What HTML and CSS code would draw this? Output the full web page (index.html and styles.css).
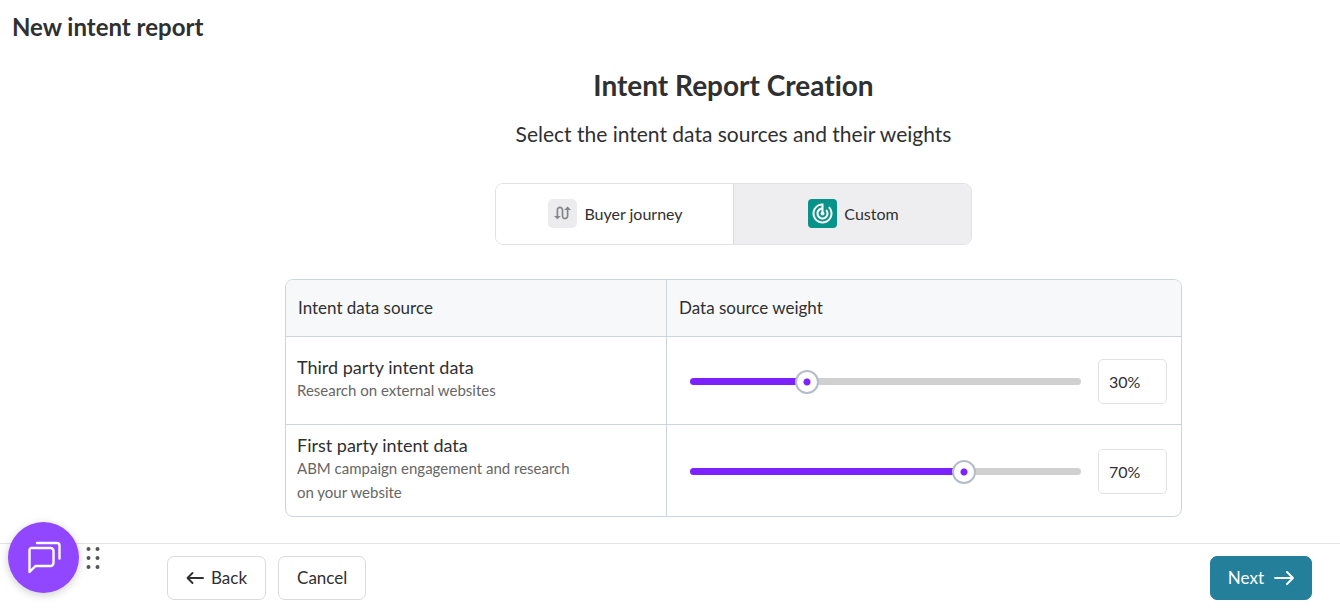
FILE: index.html
```
<!DOCTYPE html>
<html lang="en">
<head>
  <meta charset="utf-8">
  <title>New intent report</title>
  <link rel="stylesheet" href="styles.css">
</head>
<body>
  <header class="page-header">
    <h1>New intent report</h1>
  </header>

  <main class="wizard">
    <h2>Intent Report Creation</h2>
    <p class="subtitle">Select the intent data sources and their weights</p>

    <div class="tabs">
      <button type="button" class="tab">
        <svg class="tab-icon" viewBox="0 0 29 29" aria-hidden="true">
          <rect width="29" height="29" rx="5" fill="#ececee"/>
          <path transform="translate(4.3 4.2) scale(.85)" fill="#85868c" d="M18 4l-4 4h3v7c0 1.100-.9 2-2 2s-2-.9-2-2V8c0-2.210-1.790-4-4-4S5 5.790 5 8v7H2l4 4 4-4H7V8c0-1.100.9-2 2-2s2 .9 2 2v7c0 2.210 1.790 4 4 4s4-1.790 4-4V8h3l-4-4z"/>
        </svg>
        Buyer journey
      </button>
      <button type="button" class="tab active">
        <svg class="tab-icon" viewBox="0 0 29 29" aria-hidden="true">
          <rect width="29" height="29" rx="4" fill="#079389"/>
          <path transform="translate(2.5 2.5)" fill="#fff" d="M19.070 4.930l-1.410 1.410C19.100 7.790 20 9.790 20 12c0 4.420-3.580 8-8 8s-8-3.580-8-8c0-4.080 3.050-7.440 7-7.930v2.020C8.160 6.570 6 9.030 6 12c0 3.310 2.690 6 6 6s6-2.690 6-6c0-1.660-.67-3.160-1.760-4.240l-1.410 1.410C15.550 9.900 16 10.900 16 12c0 2.210-1.790 4-4 4s-4-1.790-4-4c0-1.860 1.280-3.410 3-3.860v2.140c-.6.350-1 .98-1 1.720 0 1.100.9 2 2 2s2-.9 2-2c0-.74-.4-1.380-1-1.720V2h-1C6.480 2 2 6.480 2 12s4.480 10 10 10 10-4.480 10-10c0-2.760-1.120-5.260-2.930-7.070z"/>
        </svg>
        Custom
      </button>
    </div>

    <table class="sources">
      <thead>
        <tr>
          <th class="source-col">Intent data source</th>
          <th>Data source weight</th>
        </tr>
      </thead>
      <tbody>
        <tr>
          <td>
            <label class="source-name" for="thirdParty">Third party intent data</label>
            <p class="source-info">Research on external websites</p>
          </td>
          <td class="weight-cell">
            <div class="weight">
              <div class="slider" style="--value: 30%">
                <input type="range" id="thirdParty" min="0" max="100" value="30">
              </div>
              <input type="text" class="weight-value" aria-label="Third party weight" value="30%">
            </div>
          </td>
        </tr>
        <tr class="tall">
          <td>
            <label class="source-name" for="firstParty">First party intent data</label>
            <p class="source-info">ABM campaign engagement and research on your website</p>
          </td>
          <td class="weight-cell">
            <div class="weight">
              <div class="slider" style="--value: 70%">
                <input type="range" id="firstParty" min="0" max="100" value="70">
              </div>
              <input type="text" class="weight-value" aria-label="First party weight" value="70%">
            </div>
          </td>
        </tr>
      </tbody>
    </table>
  </main>

  <footer class="actions">
    <button type="button" class="btn">
      <svg width="18" height="14" viewBox="0 0 18 14" fill="none" stroke="currentColor" stroke-width="1.900" stroke-linecap="round" stroke-linejoin="round" aria-hidden="true">
        <path d="M17 7H1.500M6.500 2l-5 5 5 5"/>
      </svg>
      Back
    </button>
    <button type="button" class="btn">Cancel</button>
    <button type="button" class="btn btn-next">
      Next
      <svg width="20" height="14" viewBox="0 0 20 14" fill="none" stroke="currentColor" stroke-width="1.900" stroke-linecap="round" stroke-linejoin="round" aria-hidden="true">
        <path d="M1 7h18M13 1l6 6-6 6"/>
      </svg>
    </button>
  </footer>

  <div class="chat">
    <button type="button" class="chat-button" aria-label="Open chat">
      <svg width="36" height="36" viewBox="0 0 36 36" fill="none" stroke="#fff" stroke-width="2.400" stroke-linecap="round" stroke-linejoin="round" aria-hidden="true">
        <path d="M5.500 8h19a3 3 0 0 1 3 3v12a3 3 0 0 1-3 3H9.500L3.500 32V10a2 2 0 0 1 2-2z"/>
        <path d="M11 3H31a2.500 2.500 0 0 1 2.500 2.500v13"/>
      </svg>
    </button>
    <svg width="16" height="24" viewBox="0 0 16 24" fill="#555" aria-hidden="true">
      <circle cx="3.500" cy="3" r="2"/><circle cx="12.500" cy="3" r="2"/>
      <circle cx="3.500" cy="12" r="2"/><circle cx="12.500" cy="12" r="2"/>
      <circle cx="3.500" cy="21" r="2"/><circle cx="12.500" cy="21" r="2"/>
    </svg>
  </div>

  <script>
    // the two weights always add up to 100%
    var sliders = document.querySelectorAll(".slider input");

    function setWeight(slider, value) {
      slider.value = value;
      slider.parentElement.style.setProperty("--value", value + "%");
      slider.closest(".weight").querySelector(".weight-value").value = value + "%";
    }

    sliders.forEach(function (slider, i) {
      slider.addEventListener("input", function () {
        setWeight(slider, slider.value);
        setWeight(sliders[1 - i], 100 - slider.value);
      });
    });
  </script>
</body>
</html>
```
FILE: styles.css
```
* {
  box-sizing: border-box;
}

body {
  margin: 0;
  min-height: 100vh;
  display: flex;
  flex-direction: column;
  font-family: Lato, sans-serif;
  font-size: 16px;
  font-variant-ligatures: none;
  color: #2f3031;
  background-color: #fff;
}

h1,
h2,
p {
  margin: 0;
}

button,
input {
  font: inherit;
  color: inherit;
}

button {
  cursor: pointer;
}

.page-header {
  padding: 11px 12px;
}

h1 {
  font-size: 24px;
  line-height: 32px;
  font-weight: 700;
}

.wizard {
  flex: 1;
  display: flex;
  flex-direction: column;
  align-items: center;
  padding: 13px 32px 24px 159px;
}

h2 {
  font-size: 28px;
  line-height: 36px;
  font-weight: 700;
}

.subtitle {
  margin-top: 17px;
  font-size: 21px;
  line-height: 28px;
}

.tabs {
  display: flex;
  width: 100%;
  max-width: 477px;
  margin-top: 35px;
  border: 1px solid #e2e2e5;
  border-radius: 8px;
  overflow: hidden;
}

.tab {
  flex: 1;
  display: flex;
  align-items: center;
  justify-content: center;
  gap: 7px;
  height: 60px;
  padding: 0 6px 2px 8px;
  border: none;
  background-color: #fff;
}

.tab.active {
  border-left: 1px solid #dcdce0;
  background-color: #eeeef0;
}

.tab-icon {
  width: 29px;
  height: 29px;
}

.sources {
  width: 100%;
  max-width: 897px;
  margin-top: 34px;
  table-layout: fixed;
  border: 1px solid #cdd5dc;
  border-radius: 8px;
  border-spacing: 0;
  overflow: hidden;
}

.sources th {
  height: 56px;
  padding: 0 12px 2px;
  background-color: #f7f8fa;
  font-size: 17px;
  font-weight: 400;
  text-align: left;
}

.sources td {
  height: 88px;
  padding: 0 11px 3px;
  border-top: 1px solid #cdd5dc;
}

.sources .tall td {
  height: 92px;
}

.sources th + th,
.sources td + td {
  border-left: 1px solid #cdd5dc;
}

.source-col {
  width: 380px;
}

.source-name {
  display: block;
  font-size: 18px;
  line-height: 22px;
}

.source-info {
  max-width: 280px;
  font-size: 15px;
  line-height: 24px;
  color: #666;
}

.sources .weight-cell {
  padding: 2px 14px 0 23px;
}

.weight {
  display: flex;
  align-items: center;
  gap: 17px;
}

.slider {
  flex: 1;
  display: flex;
  align-items: center;
  height: 7px;
  border-radius: 4px;
  background: linear-gradient(to right, #7b22ff var(--value), #d0d0d1 var(--value));
}

/* wider than the bar, so that the thumb is centred on its value */
.slider input {
  flex: 1;
  min-width: 0;
  height: 24px;
  margin: 0 -12px;
  appearance: none;
  background: transparent;
}

.slider input::-webkit-slider-thumb {
  appearance: none;
  width: 24px;
  height: 24px;
  border: 2px solid #b5bdcb;
  border-radius: 50%;
  background: radial-gradient(circle, #7b22ff 3px, #fff 4px);
}

.weight-value {
  width: 69px;
  height: 45px;
  padding: 0 10px;
  border: 1px solid #e2e2e5;
  border-radius: 5px;
}

.actions {
  display: flex;
  gap: 12px;
  padding: 12px 28px 8px 167px;
  border-top: 1px solid #e4e4e6;
}

.btn {
  display: flex;
  align-items: center;
  gap: 7px;
  height: 44px;
  padding: 0 18px 1px;
  border: 1px solid #dadadd;
  border-radius: 7px;
  background-color: #fff;
  font-size: 17px;
}

.btn-next {
  gap: 10px;
  margin-left: auto;
  padding: 0 17px 1px;
  border-color: #247f9b;
  background-color: #247f9b;
  color: #fff;
}

.chat {
  position: fixed;
  left: 8px;
  bottom: 15px;
  display: flex;
  align-items: center;
  gap: 6px;
}

.chat-button {
  display: flex;
  align-items: center;
  justify-content: center;
  width: 71px;
  height: 71px;
  padding: 0;
  border: none;
  border-radius: 50%;
  background-color: #9147ff;
  box-shadow: 0 2px 8px rgba(0, 0, 0, 0.2);
}
```
